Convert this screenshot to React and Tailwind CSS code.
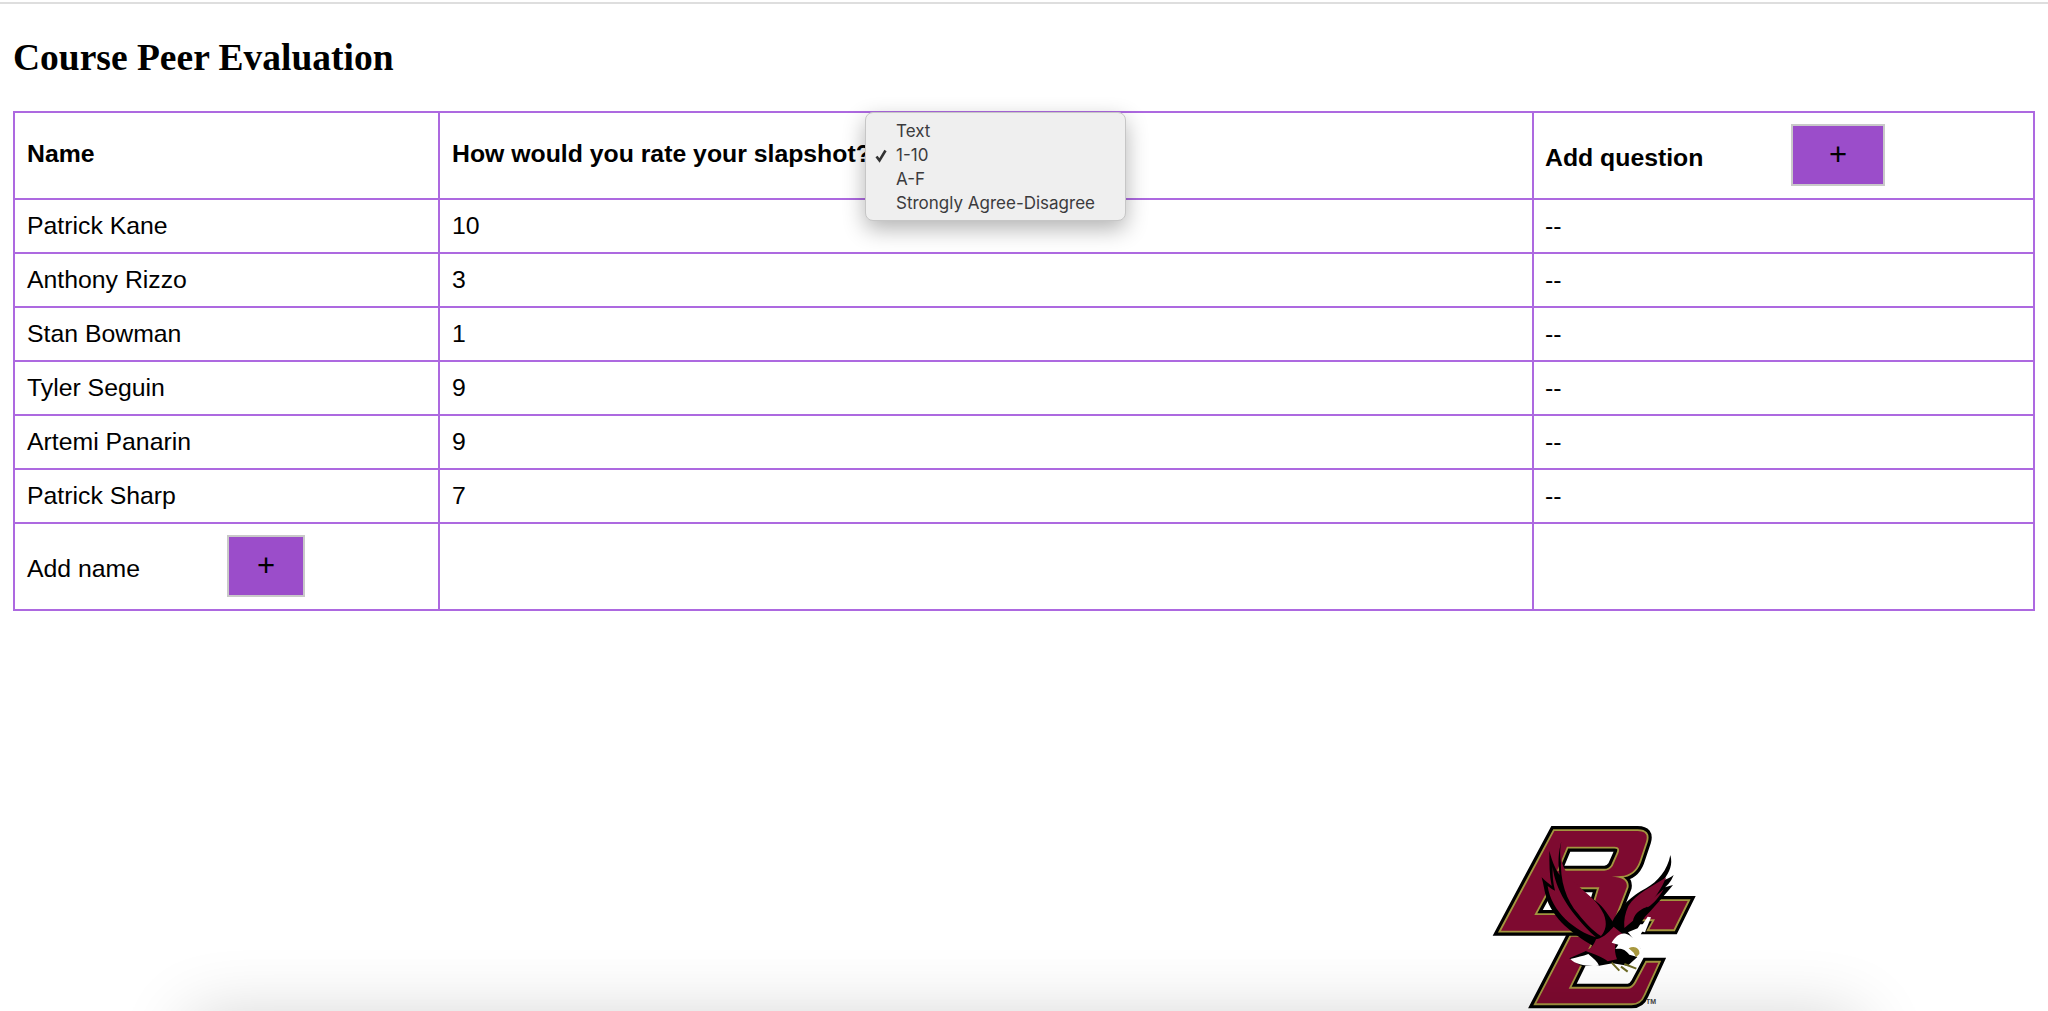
// App.jsx
import React from "react";

const PURPLE_LINE = "border-2 border-[#ad69e0]";
const MAROON = "#7e0a30";

const rows = [
  ["Patrick Kane", "10"],
  ["Anthony Rizzo", "3"],
  ["Stan Bowman", "1"],
  ["Tyler Seguin", "9"],
  ["Artemi Panarin", "9"],
  ["Patrick Sharp", "7"],
];

const menuItems = ["Text", "1-10", "A-F", "Strongly Agree-Disagree"];

// letter shapes of the logo, each stroked twice (black, gold) and then filled maroon
const letterPaths = [
  "M270 410 L166 610 L452 610 Q478 610 488 584 L532 488 L497 488 L465 548 Q455 566 440 566 L263 566 L340 410 Z",
  "M530 303 L620 303 L578 388 L505 388 L522 358 L480 358 Z",
  "M220 93 L470 93 Q505 93 495 125 L475 185 Q460 225 420 228 L392 230 Q442 232 437 262 L405 345 Q388 392 340 392 L60 392 Z M258 140 L400 140 Q420 140 412 160 L395 198 Q385 212 370 212 L228 212 Z M205 262 L355 262 L330 345 L160 345 Z",
];

function BcLogo() {
  return (
    <svg viewBox="0 0 720 633" className="w-[240px] h-[211px] block">
      {letterPaths.map((d) => (
        <g key={d} fillRule="evenodd">
          <path d={d} fill="none" stroke="#000" strokeWidth="30" />
          <path d={d} fill="none" stroke="#a3953f" strokeWidth="11" />
          <path d={d} fill={MAROON} />
        </g>
      ))}
      {/* white gap under the right wing */}
      <path d="M472 392 L500 350 L510 352 L492 397 Z" fill="#fff" />
      {/* right wing */}
      <path d="M568 165 C576 195 566 215 548 240 C562 236 570 231 578 225 C570 245 560 255 552 262 L576 255 C545 292 512 330 492 350 L470 385 L420 405 L390 372 C415 320 455 285 495 265 C530 245 560 210 568 165 Z" fill="#000" />
      <path d="M556 232 C515 258 465 282 442 318 C432 340 428 360 430 384 L456 362 C460 345 472 330 496 322 C520 298 540 268 556 232 Z" fill={MAROON} />
      <path d="M548 268 C530 285 510 300 488 312 L500 322 C520 310 535 290 548 268 Z" fill={MAROON} />
      {/* left wing and body */}
      <path d="M241 125 C232 165 240 210 262 245 C290 275 345 290 375 335 L400 372 L440 395 L478 445 L470 470 L440 497 L395 490 L350 498 L300 497 L265 475 L310 455 L340 440 C290 410 225 370 198 300 C190 275 188 255 182 232 C195 245 205 252 212 258 C205 225 205 190 205 152 C215 190 225 210 236 225 C230 190 232 155 241 125 Z" fill="#000" />
      <path d="M240 170 C250 255 338 272 368 342 C380 372 374 392 360 408 C335 392 312 368 292 342 C256 300 236 245 240 170 Z" fill={MAROON} />
      <path d="M215 200 C222 265 262 335 345 412 C285 395 210 335 200 258 C208 265 218 270 222 272 C216 248 214 225 215 200 Z" fill={MAROON} />
      <path d="M345 418 C372 412 388 390 398 380 L425 402 C402 420 396 445 408 478 L380 484 C365 470 345 465 312 452 C330 448 340 432 345 418 Z" fill={MAROON} />
      <path d="M392 428 C405 405 425 392 445 406 C462 418 472 432 480 447 L472 472 L445 464 C432 447 420 444 403 447 L412 434 Z" fill="#fff" />
      <path d="M443 445 C460 435 478 445 475 462 L465 472 L458 458 Z" fill="#a8983f" />
      <path d="M268 477 C290 472 305 468 322 462 C338 476 350 485 354 497 C320 500 285 495 268 477 Z" fill="#fff" />
      <path d="M392 488 L415 512 M430 492 L466 506 M420 500 L440 515" fill="none" stroke="#6d6a24" strokeWidth="6" />
    </svg>
  );
}

function AddButton({ width }) {
  return (
    <button className={`${width} h-[62px] -mt-[2px] shrink-0 bg-[#9b4dca] border-2 border-[#c9c9c9] text-[31px] leading-none font-normal text-black`}>
      +
    </button>
  );
}

export default function App() {
  return (
    <div className="relative h-[1011px] overflow-hidden bg-white text-black font-['Liberation_Sans',Arial,sans-serif]">
      <div className="h-[4px] border-b-2 border-[#dedede]" />

      <h1 className="ml-[13px] mt-[34px] mb-[33px] h-[40px] font-['Liberation_Serif','Times_New_Roman',serif] font-bold text-[37.5px] leading-[40px]">
        Course Peer Evaluation
      </h1>

      <table className="ml-[13px] w-[2022px] table-fixed border-collapse text-[24.8px]">
        <colgroup>
          <col className="w-[425px]" />
          <col className="w-[1094px]" />
          <col />
        </colgroup>
        <thead>
          <tr className="h-[87px] text-left">
            <th className={`${PURPLE_LINE} pl-[12px] pb-[4px] font-bold`}>Name</th>
            <th className={`${PURPLE_LINE} pl-[12px] pb-[4px] font-bold whitespace-nowrap`}>How would you rate your slapshot?</th>
            <th className={`${PURPLE_LINE} pl-[11px] font-bold`}>
              <div className="flex items-center">
                <span className="w-[246px] pt-[4px]">Add question</span>
                <AddButton width="w-[94px]" />
              </div>
            </th>
          </tr>
        </thead>
        <tbody>
          {rows.map(([name, score]) => (
            <tr key={name} className="h-[54px]">
              <td className={`${PURPLE_LINE} pl-[12px]`}>{name}</td>
              <td className={`${PURPLE_LINE} pl-[12px]`}>{score}</td>
              <td className={`${PURPLE_LINE} pl-[11px]`}>--</td>
            </tr>
          ))}
          <tr className="h-[87px]">
            <td className={`${PURPLE_LINE} pl-[12px]`}>
              <div className="flex items-center">
                <span className="w-[200px] pt-[4px]">Add name</span>
                <AddButton width="w-[78px]" />
              </div>
            </td>
            <td className={PURPLE_LINE} />
            <td className={PURPLE_LINE} />
          </tr>
        </tbody>
      </table>

      {/* type dropdown open over the table */}
      <div className="absolute left-[865px] top-[112px] w-[261px] h-[109px] rounded-[8px] bg-[#efefef] border border-[#c6c6c6] shadow-[0_8px_22px_rgba(0,0,0,0.3)] pt-[6px] pl-[30px] font-['Inter',sans-serif] text-[17px] leading-[24px] text-[#3b3b3d]">
        {menuItems.map((item) => (
          <div key={item} className="relative h-[24px] whitespace-nowrap">
            {item === "1-10" && (
              <svg viewBox="0 0 12 14" className="absolute left-[-21px] top-[6px] w-[12px] h-[14px]">
                <path d="M1.5 7.5 L4.5 11.5 L10.5 1.5" fill="none" stroke="#333" strokeWidth="2.6" />
              </svg>
            )}
            {item}
          </div>
        ))}
      </div>

      {/* logo pinned at the bottom of the page */}
      <div className="absolute left-[1481px] top-[800px]">
        <BcLogo />
        <span className="absolute left-[165px] top-[198px] text-[7px] leading-[8px] font-bold text-[#444]">TM</span>
      </div>

      {/* shadow of the window below */}
      <div className="absolute left-[190px] right-[190px] top-[1018px] h-[80px] shadow-[0_0_70px_rgba(0,0,0,0.19)]" />
    </div>
  );
}
